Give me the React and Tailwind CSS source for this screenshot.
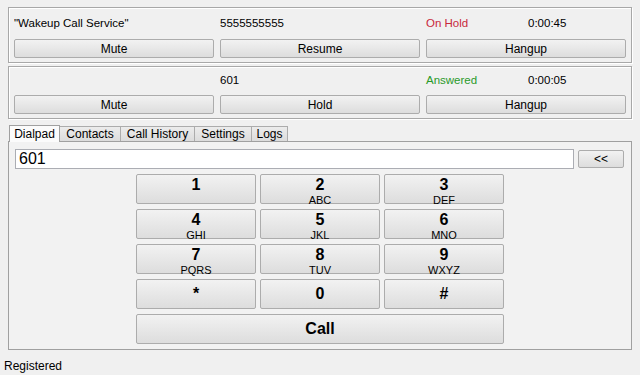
import React from "react";

const font = { fontFamily: '"Liberation Sans", Arial, sans-serif' };

const btn =
  "flex items-center justify-center border border-[#acacac] rounded-[2px] bg-gradient-to-b from-[#f2f2f2] to-[#dddddd] text-[12px] text-black";

const calls = [
  { name: '"Wakeup Call Service"', number: "5555555555", status: "On Hold", color: "text-[#c8283c]", time: "0:00:45", action: "Resume", h: "h-[56px]", pt: "pt-[7px]", gap: "mt-[8px]" },
  { name: "", number: "601", status: "Answered", color: "text-[#2a9a2a]", time: "0:00:05", action: "Hold", h: "h-[53px]", pt: "pt-[5px]", gap: "mt-[7px]" },
];

const keys = [
  ["1", " "], ["2", "ABC"], ["3", "DEF"],
  ["4", "GHI"], ["5", "JKL"], ["6", "MNO"],
  ["7", "PQRS"], ["8", "TUV"], ["9", "WXYZ"],
  ["*", ""], ["0", ""], ["#", ""],
];

const tabs = [
  ["Dialpad", "w-[51px]"],
  ["Contacts", "w-[61px]"],
  ["Call History", "w-[74px]"],
  ["Settings", "w-[57px]"],
  ["Logs", "w-[36px]"],
];

function CallBox({ call }) {
  return (
    <div className={`${call.h} ${call.pt} px-[5px] border border-[#a8a8a8] shadow-[inset_1px_1px_0_#ffffff,1px_1px_0_#ffffff]`}>
      <div className="grid grid-cols-3 gap-x-[6px] h-[16px] items-center text-[11.5px] text-black">
        <span className="truncate">{call.name}</span>
        <span>{call.number}</span>
        <div className="flex">
          <span className={`w-[102px] ${call.color}`}>{call.status}</span>
          <span>{call.time}</span>
        </div>
      </div>
      <div className={`grid grid-cols-3 gap-x-[6px] ${call.gap}`}>
        <div className={`${btn} h-[19px]`}>Mute</div>
        <div className={`${btn} h-[19px]`}>{call.action}</div>
        <div className={`${btn} h-[19px]`}>Hangup</div>
      </div>
    </div>
  );
}

export default function App() {
  return (
    <div style={font} className="w-[640px] h-[375px] bg-[#f0f0f0] flex flex-col overflow-hidden">
      <div className="px-[8px] pt-[7px] flex flex-col gap-[3px]">
        {calls.map((c, i) => (
          <CallBox key={i} call={c} />
        ))}
      </div>

      {/* Tabs */}
      <div className="mx-[8px] mt-[5px] flex items-end h-[17px] pl-[1px] text-[12px] text-black">
        {tabs.map(([t, w], i) =>
          i === 0 ? (
            <div key={t} className={`${w} h-[17px] flex items-center justify-center bg-[#fbfbfb] border border-b-0 border-[#a0a0a0] relative top-[1px] z-10`}>
              {t}
            </div>
          ) : (
            <div key={t} className={`${w} h-[15px] flex items-center justify-center bg-gradient-to-b from-[#ececec] to-[#dcdcdc] border border-l-0 border-b-0 border-[#acacac]`}>
              {t}
            </div>
          )
        )}
      </div>

      {/* Tab panel */}
      <div className="mx-[8px] h-[212px] border border-[#a0a0a0] bg-[#f2f2f2] px-[6px] pt-[7px]">
        <div className="flex gap-[4px] items-center">
          <div className="w-[559px] h-[20px] bg-white border border-[#abadb3] flex items-center px-[3px] text-[16px] text-black">
            601
          </div>
          <div className={`${btn} w-[46px] h-[18px] text-[11px]`}>&lt;&lt;</div>
        </div>

        <div className="mt-[5px] ml-[121px] w-[368px] grid grid-cols-3 gap-x-[4px] gap-y-[5px]">
          {keys.map(([d, l]) =>
            l ? (
              <div key={d} className={`${btn} h-[30px] flex-col justify-start pt-[2px] leading-none`}>
                <span className="text-[16px] font-bold h-[16px]">{d}</span>
                <span className="text-[11px] mt-[2px] h-[11px]">{l}</span>
              </div>
            ) : (
              <div key={d} className={`${btn} h-[30px] text-[16px] font-bold`}>
                {d}
              </div>
            )
          )}
          <div className={`${btn} col-span-3 h-[30px] text-[16px] font-bold`}>Call</div>
        </div>
      </div>

      <div className="px-[4px] mt-[7px] text-[12px] text-black">Registered</div>
    </div>
  );
}
